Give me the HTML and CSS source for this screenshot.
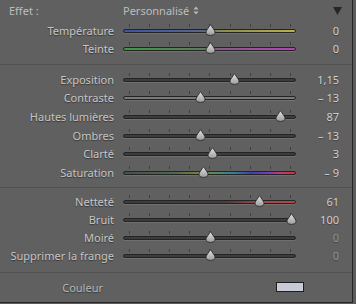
FILE: index.html
```html
<!DOCTYPE html>
<html lang="fr">
<head>
    <meta charset="UTF-8">
    <title>Effet</title>
    <link rel="stylesheet" href="styles.css">
</head>
<body>

<svg width="0" height="0" class="defs">
    <defs>
        <linearGradient id="thumb-fill" x1="0" y1="0" x2="0" y2="1">
            <stop offset="0" stop-color="#e2e2e2"/>
            <stop offset="1" stop-color="#9c9c9c"/>
        </linearGradient>
        <symbol id="thumb" viewBox="0 0 11 12">
            <path d="M5.5 0.6 L9.2 6 Q10.6 8 9.8 9.6 Q8.8 11.4 5.5 11.4 Q2.2 11.4 1.2 9.6 Q0.4 8 1.8 6 Z" fill="url(#thumb-fill)" stroke="#2c2c2c" stroke-width="0.9"/>
        </symbol>
    </defs>
</svg>

<div class="panel">
    <div class="head">
        <span class="effet">Effet :</span>
        <span class="preset">Personnalisé
            <svg class="updown" width="6" height="9" viewBox="0 0 6 9"><path d="M3 0.5 L5.5 3.5 H0.5 Z M3 8.5 L5.5 5.5 H0.5 Z" fill="#b8b8b8"/></svg>
        </span>
        <svg class="collapse" width="9" height="8" viewBox="0 0 9 8"><path d="M0 0 H9 L4.5 8 Z" fill="#262626"/></svg>
    </div>

    <div class="group g1">
        <div class="row">
            <span class="label">Température</span>
            <div class="track temp"><svg class="thumb" style="left:81px"><use href="#thumb"/></svg></div>
            <span class="val">0</span>
        </div>
        <div class="row">
            <span class="label">Teinte</span>
            <div class="track tint"><svg class="thumb" style="left:81px"><use href="#thumb"/></svg></div>
            <span class="val">0</span>
        </div>
    </div>

    <div class="group g2">
        <div class="row">
            <span class="label">Exposition</span>
            <div class="track"><svg class="thumb" style="left:104.5px"><use href="#thumb"/></svg></div>
            <span class="val">1,15</span>
        </div>
        <div class="row">
            <span class="label">Contraste</span>
            <div class="track light"><svg class="thumb" style="left:70.5px"><use href="#thumb"/></svg></div>
            <span class="val">– 13</span>
        </div>
        <div class="row">
            <span class="label">Hautes lumières</span>
            <div class="track"><svg class="thumb" style="left:151px"><use href="#thumb"/></svg></div>
            <span class="val">87</span>
        </div>
        <div class="row">
            <span class="label">Ombres</span>
            <div class="track"><svg class="thumb" style="left:70.5px"><use href="#thumb"/></svg></div>
            <span class="val">– 13</span>
        </div>
        <div class="row">
            <span class="label">Clarté</span>
            <div class="track"><svg class="thumb" style="left:83.4px"><use href="#thumb"/></svg></div>
            <span class="val">3</span>
        </div>
        <div class="row">
            <span class="label">Saturation</span>
            <div class="track sat"><svg class="thumb" style="left:73.8px"><use href="#thumb"/></svg></div>
            <span class="val">– 9</span>
        </div>
    </div>

    <div class="group g3">
        <div class="row">
            <span class="label">Netteté</span>
            <div class="track sharp"><svg class="thumb" style="left:130px"><use href="#thumb"/></svg></div>
            <span class="val">61</span>
        </div>
        <div class="row">
            <span class="label">Bruit</span>
            <div class="track"><svg class="thumb" style="left:161.5px"><use href="#thumb"/></svg></div>
            <span class="val">100</span>
        </div>
        <div class="row">
            <span class="label">Moiré</span>
            <div class="track"><svg class="thumb" style="left:81px"><use href="#thumb"/></svg></div>
            <span class="val dim">0</span>
        </div>
        <div class="row">
            <span class="label">Supprimer la frange</span>
            <div class="track"><svg class="thumb" style="left:81px"><use href="#thumb"/></svg></div>
            <span class="val dim">0</span>
        </div>
    </div>

    <div class="couleur">
        <span class="label">Couleur</span>
        <span class="swatch"></span>
    </div>
</div>

</body>
</html>
```

FILE: styles.css
```css
body {
    margin: 0;
    background: #5c5c5c;
    font-family: "Noto Sans", "Open Sans", sans-serif;
    font-size: 11px;
    color: #c6c6c6;
}

.defs {
    position: absolute;
}

.panel {
    width: 352px;
    height: 302px;
    background: #606060;
    border-right: 1px solid #262626;
    border-bottom: 1px solid #262626;
}

.head {
    height: 21px;
    display: flex;
    align-items: center;
    padding: 0 10px 0 9px;
    color: #bdbdbd;
}

.effet {
    width: 114px;
}

.preset {
    flex: 1;
    display: flex;
    align-items: center;
    gap: 4px;
}

.group {
    border-bottom: 1px solid #505050;
}

.g1 {
    padding-bottom: 7px;
}

.g2 {
    padding: 5px 0;
}

.g2 .row {
    height: 18.6px;
}

.g3 {
    padding: 5px 0 7px;
}

.row {
    height: 18px;
    display: grid;
    grid-template-columns: 114px 173px 34px;
    column-gap: 9px;
    align-items: center;
}

.label {
    text-align: right;
    text-shadow: 0 1px 1px rgba(0,0,0,0.45);
    white-space: nowrap;
}

.val {
    text-align: right;
    color: #cfcfcf;
    text-shadow: 0 1px 1px rgba(0,0,0,0.35);
}

.val.dim {
    color: #959595;
}

.track {
    position: relative;
    height: 2px;
    margin-top: 1px;
    border: 1px solid #242424;
    border-radius: 2px;
    background: #3c3c3c;
    box-shadow: 0 1px 0 rgba(255,255,255,0.1);
}

/* tick marks above the track */
.track::before {
    content: "";
    position: absolute;
    left: 5px;
    top: -6px;
    width: 163px;
    height: 3px;
    background: repeating-linear-gradient(to right, #404040 0 1px, transparent 1px 20.125px);
}

.track.light {
    background: #7a7a7a;
}

.track.temp {
    background: linear-gradient(to right, #3a56aa, #5a6688 48%, #8c8a52 56%, #bab24a);
}

.track.tint {
    background: linear-gradient(to right, #3e9a44, #5d7a5e 48%, #8a5a8a 56%, #b444b4);
}

.track.sat {
    background: linear-gradient(to right, #44524c 0%, #4e6a4c 30%, #7c8440 45%, #4a8a6a 56%, #3a7c9a 64%, #3a44b4 74%, #7a3ab4 84%, #c03a7a 92%, #c83434 100%);
}

.track.sharp {
    background: linear-gradient(to right, #3c3c3c 0%, #4a3e3e 60%, #a24646 80%, #b04848 100%);
}

.thumb {
    position: absolute;
    top: -6px;
    width: 11px;
    height: 12px;
}

.couleur {
    height: 29px;
    display: flex;
    align-items: center;
}

.couleur .label {
    width: 103px;
    color: #b8b8b8;
}

.swatch {
    margin-left: 173px;
    width: 26px;
    height: 8px;
    background: #c8cad6;
    border: 1px solid #1e1e1e;
}
```
